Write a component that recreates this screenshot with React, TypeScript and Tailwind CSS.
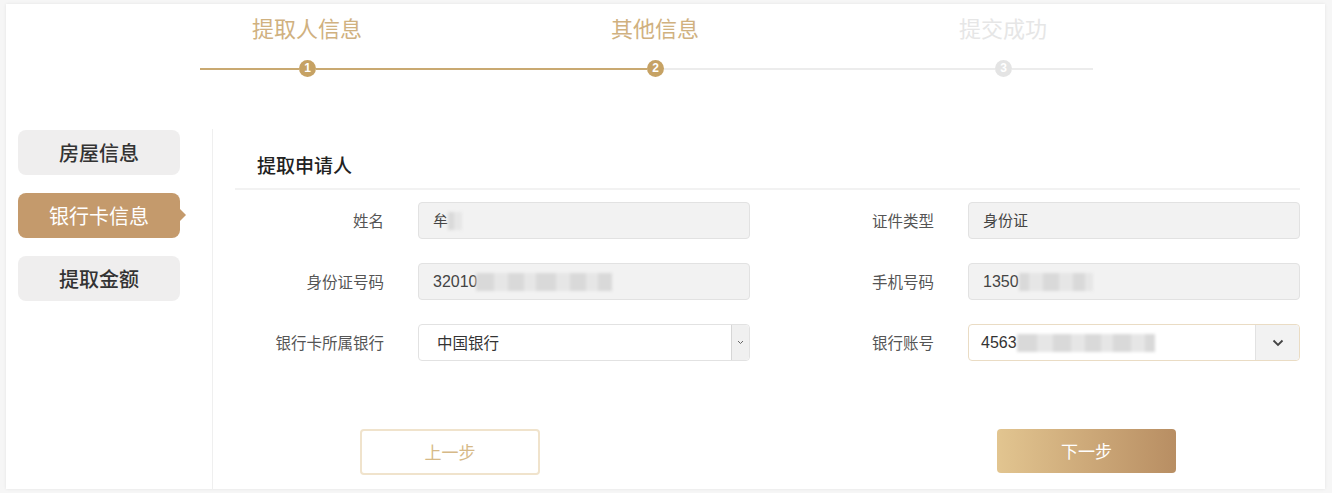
import React from "react"

const FONT = "font-['Microsoft_YaHei','Noto_Sans_CJK_SC',sans-serif]"

const STEPS = [
  { label: "提取人信息", n: 1, done: true },
  { label: "其他信息", n: 2, done: true },
  { label: "提交成功", n: 3, done: false },
]

function Mosaic({ widths }: { widths: number[] }) {
  // pixelated mask over private digits
  return (
    <span className="inline-flex items-center h-[22px] blur-[1.5px]">
      {widths.map((w, i) => (
        <span
          key={i}
          className={i % 2 === 0 ? "h-[18px] bg-[#d9d9d9]" : "h-[18px] bg-[#e6e6e6]"}
          style={{ width: w }}
        />
      ))}
    </span>
  )
}

function Dot({ n, done }: { n: number; done: boolean }) {
  return (
    <div
      className={`w-[17px] h-[17px] rounded-full text-white text-[12px] leading-[17px] text-center font-bold font-['Liberation_Sans',sans-serif] ${
        done ? "bg-[#c6a264]" : "bg-[#e4e4e4]"
      }`}
    >
      {n}
    </div>
  )
}

function Stepper() {
  return (
    <div className="pt-[8px]">
      <div className="flex pl-[201px] gap-[148px]">
        {STEPS.map((s) => (
          <div
            key={s.n}
            className={`w-[200px] text-center text-[22px] leading-[30px] ${
              s.done ? "text-[#d0b17f]" : "text-[#e6e6e6]"
            }`}
          >
            {s.label}
          </div>
        ))}
      </div>
      <div className="flex items-center mt-[18px] ml-[194px] h-[17px]">
        <div className="w-[99px] h-[2px] bg-[#c9a971]" />
        <Dot n={1} done />
        <div className="w-[331px] h-[2px] bg-[#c9a971]" />
        <Dot n={2} done />
        <div className="w-[331px] h-[2px] bg-[#ececec]" />
        <Dot n={3} done={false} />
        <div className="w-[81px] h-[2px] bg-[#ececec]" />
      </div>
    </div>
  )
}

function Sidebar() {
  return (
    <div className="w-[162px] ml-[12px] flex flex-col gap-[18px] pt-[3px]">
      <div className="h-[45px] rounded-[8px] bg-[#efeeee] text-[#333] text-[20px] flex items-center justify-center font-medium">
        房屋信息
      </div>
      <div className="relative h-[45px] rounded-[8px] bg-[#c49a6c] text-white text-[20px] flex items-center justify-center">
        银行卡信息
        <span className="absolute right-[-6px] top-[16px] w-0 h-0 border-y-[6px] border-y-transparent border-l-[6px] border-l-[#c49a6c]" />
      </div>
      <div className="h-[45px] rounded-[8px] bg-[#efeeee] text-[#333] text-[20px] flex items-center justify-center font-medium">
        提取金额
      </div>
    </div>
  )
}

function Field({
  label,
  labelW,
  children,
}: {
  label: string
  labelW: string
  children: React.ReactNode
}) {
  return (
    <div className="flex items-center">
      <div className={`${labelW} text-right text-[15.5px] text-[#555]`}>{label}</div>
      <div className="ml-[34px] w-[332px] h-[37px]">{children}</div>
    </div>
  )
}

function ReadOnly({ children }: { children: React.ReactNode }) {
  return (
    <div className="h-full rounded-[4px] border border-[#e2e2e2] bg-[#f2f2f2] flex items-center pl-[14px] text-[15px] text-[#444]">
      {children}
    </div>
  )
}

export default function App() {
  return (
    <div className={`w-[1332px] h-[493px] bg-[#f6f6f6] pt-[4px] pl-[6px] overflow-hidden ${FONT}`}>
      <div className="w-[1319px] h-[485px] bg-white shadow-[0_0_3px_rgba(0,0,0,0.08)] flex flex-col">
        <Stepper />
        <div className="flex mt-[50px] flex-1">
          <Sidebar />
          <div className="ml-[32px] w-px bg-[#efefef] mt-[2px]" />
          <div className="ml-[22px] w-[1065px]">
            <div className="mt-[25px] pb-[10px] border-b-2 border-[#f2f2f2] pl-[22px] text-[19px] leading-[26px] text-[#222] font-medium">
              提取申请人
            </div>
            <div className="mt-[12px] flex flex-col gap-[24px]">
              <div className="flex">
                <Field label="姓名" labelW="w-[149px]">
                  <ReadOnly>
                    <span>牟</span>
                    <Mosaic widths={[6, 8]} />
                  </ReadOnly>
                </Field>
                <Field label="证件类型" labelW="w-[184px]">
                  <ReadOnly>身份证</ReadOnly>
                </Field>
              </div>
              <div className="flex">
                <Field label="身份证号码" labelW="w-[149px]">
                  <ReadOnly>
                    <span className="font-['Liberation_Sans',sans-serif] text-[16px]">3201</span>
                    <span className="font-['Liberation_Sans',sans-serif] text-[16px] -mr-[2px]">0</span>
                    <Mosaic widths={[18, 14, 16, 12, 20, 14, 16, 12, 14]} />
                  </ReadOnly>
                </Field>
                <Field label="手机号码" labelW="w-[184px]">
                  <ReadOnly>
                    <span className="font-['Liberation_Sans',sans-serif] text-[16px]">1350</span>
                    <Mosaic widths={[10, 14, 16, 14, 12, 8]} />
                  </ReadOnly>
                </Field>
              </div>
              <div className="flex">
                <Field label="银行卡所属银行" labelW="w-[149px]">
                  <div className="h-full rounded-[4px] border border-[#e2e2e2] bg-white flex items-center text-[15.5px] text-[#333]">
                    <span className="flex-1 pl-[18px]">中国银行</span>
                    <span className="w-[18px] h-full border-l border-[#d6d6d6] bg-[#f0f0f0] rounded-r-[4px] flex items-center justify-center">
                      <svg width="7" height="5" viewBox="0 0 7 5">
                        <path d="M1 1l2.5 2.5L6 1" fill="none" stroke="#666" strokeWidth="1" />
                      </svg>
                    </span>
                  </div>
                </Field>
                <Field label="银行账号" labelW="w-[184px]">
                  <div className="h-full flex rounded-[4px] border border-[#eadcc4] bg-white text-[15px] text-[#333]">
                    <div className="flex-1 flex items-center pl-[12px]">
                      <span className="font-['Liberation_Sans',sans-serif] text-[16px]">4563</span>
                      <Mosaic widths={[20, 16, 18, 14, 16, 12, 18, 14, 10]} />
                    </div>
                    <span className="w-[44px] h-full border-l border-[#e2e2e2] bg-[#f2f2f2] rounded-r-[4px] flex items-center justify-center">
                      <svg width="12" height="8" viewBox="0 0 12 8">
                        <path d="M1.5 1.5L6 6l4.5-4.5" fill="none" stroke="#444" strokeWidth="1.8" />
                      </svg>
                    </span>
                  </div>
                </Field>
              </div>
            </div>
            <div className="mt-[68px] flex">
              <button
                type="button"
                className="ml-[125px] w-[180px] h-[46px] rounded-[4px] border-2 border-[#f0e3cc] bg-white text-[#d6b987] text-[17px]"
              >
                上一步
              </button>
              <button
                type="button"
                className="ml-[457px] w-[179px] h-[44px] rounded-[4px] bg-gradient-to-r from-[#e2c590] to-[#b88e63] text-white text-[17px]"
              >
                下一步
              </button>
            </div>
          </div>
        </div>
      </div>
    </div>
  )
}
